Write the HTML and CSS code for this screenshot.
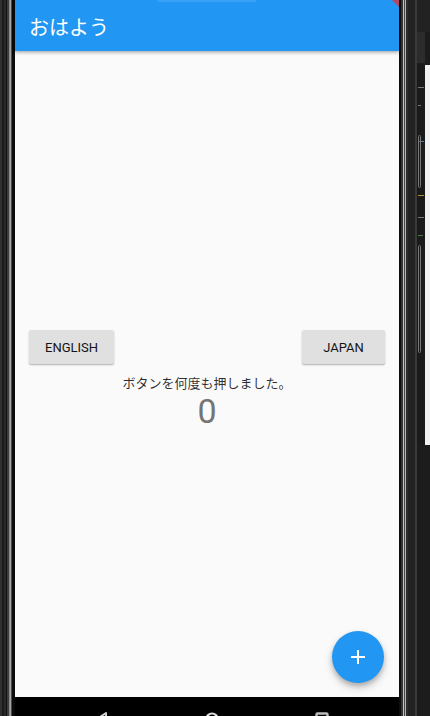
FILE: index.html
```html
<!DOCTYPE html>
<html lang="ja">
<head>
<meta charset="utf-8">
<title>おはよう</title>
<link rel="stylesheet" href="styles.css">
</head>
<body>
<div class="device">
  <div class="rim-left"></div>
  <div class="screen">
    <header class="appbar">
      <div class="notch"></div>
      <h1 class="title">おはよう</h1>
      <div class="banner"></div>
    </header>
    <main class="content">
      <div class="center">
        <div class="btn-row">
          <button class="btn">ENGLISH</button>
          <button class="btn">JAPAN</button>
        </div>
        <p class="label">ボタンを何度も押しました。</p>
        <p class="count">0</p>
      </div>
      <button class="fab" aria-label="increment">
        <svg width="14" height="14" viewBox="0 0 14 14"><path d="M7 0v14M0 7h14" stroke="#fff" stroke-width="2"/></svg>
      </button>
    </main>
    <nav class="navbar">
      <svg class="nav-icon" width="14" height="14" viewBox="0 0 14 14"><path d="M11 1 L2 7 L11 13 Z" fill="none" stroke="#d0d0d0" stroke-width="2" stroke-linejoin="round"/></svg>
      <svg class="nav-icon" width="14" height="14" viewBox="0 0 14 14"><circle cx="7" cy="7" r="5.5" fill="none" stroke="#e0e0e0" stroke-width="2.2"/></svg>
      <svg class="nav-icon" width="14" height="14" viewBox="0 0 14 14"><rect x="1.5" y="1.5" width="11" height="11" rx="1" fill="none" stroke="#bdbdbd" stroke-width="2.4"/></svg>
    </nav>
  </div>
  <div class="rim-right"></div>
  <div class="side">
    <div class="side-top"></div>
    <div class="side-tab"></div>
    <div class="side-gap"></div>
    <div class="side-mid">
      <div class="tool-col">
        <span class="mark grey m1"></span>
        <span class="mark grey m2"></span>
        <span class="mark blue m3"></span>
        <span class="pill p1"></span>
        <span class="mark orange m4"></span>
        <span class="mark grey m5"></span>
        <span class="mark green m6"></span>
        <span class="pill p2"></span>
      </div>
      <div class="strip"></div>
    </div>
    <div class="side-bottom"></div>
  </div>
</div>
</body>
</html>
```

FILE: styles.css
```css
* { box-sizing: border-box; }
html, body { margin: 0; padding: 0; }
body {
  width: 430px;
  height: 716px;
  overflow: hidden;
  background: #1c1c1c;
  font-family: Roboto, "Noto Sans CJK JP", sans-serif;
}
.device {
  display: flex;
  width: 430px;
  height: 716px;
}
.rim-left {
  width: 15px;
  flex: none;
  background: linear-gradient(to right,
    #303030 0 2px, #1c1c1c 2px 4px, #2a2a2a 4px 6px, #0e0e0e 6px 7px,
    #3e3e3e 7px 9px, #8c8c8c 9px 10px, #a4a4a4 10px 11px, #4a4a4a 11px 12px,
    #0a0a0a 12px 15px);
}
.screen {
  width: 384px;
  flex: none;
  display: flex;
  flex-direction: column;
  background: #fafafa;
}
.appbar {
  position: relative;
  height: 51px;
  flex: none;
  background: #2196f3;
  box-shadow: 0 1px 3px rgba(0,0,0,0.25), 0 2px 4px rgba(0,0,0,0.12);
  z-index: 2;
  overflow: hidden;
}
.notch {
  width: 98px;
  height: 2px;
  margin: 0 0 0 143px;
  background: #3aa2f6;
}
.title {
  margin: 0;
  height: 49px;
  display: flex;
  align-items: center;
  padding-left: 14px;
  font-family: "Noto Sans CJK JP", sans-serif;
  font-weight: 400;
  font-size: 20px;
  line-height: 1;
  color: #fff;
}
.banner {
  position: absolute;
  top: -6px;
  right: -10px;
  width: 22px;
  height: 10px;
  background: #b04866;
  transform: rotate(45deg);
}
.content {
  position: relative;
  flex: 1;
  display: flex;
  flex-direction: column;
  justify-content: center;
}
.center {
  padding-top: 13px;
  display: flex;
  flex-direction: column;
  align-items: center;
}
.btn-row {
  align-self: stretch;
  display: flex;
  justify-content: space-between;
  padding: 0 14px;
}
.btn {
  height: 34px;
  min-width: 83px;
  padding: 0 16px;
  border: none;
  border-radius: 2px;
  background: #e0e0e0;
  box-shadow: 0 1px 2px rgba(0,0,0,0.22), 0 1px 1px rgba(0,0,0,0.1);
  font-family: Roboto, sans-serif;
  font-weight: 400;
  font-size: 13px;
  color: #141414;
}
.label {
  margin: 10px 0 0;
  font-family: "Noto Sans CJK JP", sans-serif;
  font-size: 13px;
  line-height: 17px;
  color: rgba(0,0,0,0.82);
}
.count {
  margin: 0;
  font-family: Roboto, sans-serif;
  font-size: 34px;
  line-height: normal;
  color: #757575;
}
.fab {
  position: absolute;
  right: 15px;
  bottom: 14px;
  width: 52px;
  height: 52px;
  border: none;
  border-radius: 50%;
  background: #2196f3;
  box-shadow: 0 3px 5px rgba(0,0,0,0.22), 0 5px 10px rgba(0,0,0,0.14);
  display: flex;
  align-items: center;
  justify-content: center;
  padding: 0;
}
.navbar {
  height: 19px;
  flex: none;
  background: #000;
  display: flex;
  align-items: flex-start;
  padding: 15px 0 0 80px;
  gap: 96px;
  overflow: hidden;
}
.nav-icon { flex: none; }
.rim-right {
  width: 18px;
  flex: none;
  background: linear-gradient(to right,
    #0d0d0d 0 2px, #333 2px 4px, #c4c4c4 4px 5px, #454545 5px 6px,
    #b4b4b4 6px 7px, #2c2c2c 7px 9px, #222 9px 16px, #3a3a3a 16px 18px);
}
.side {
  width: 13px;
  flex: none;
  display: flex;
  flex-direction: column;
  background: #1c1c1c;
}
.side-top { height: 32px; background: #222; }
.side-tab { height: 31px; background: #2c2c2c; margin-right: 5px; }
.side-gap { height: 2px; }
.side-mid {
  height: 380px;
  display: flex;
}
.tool-col {
  width: 8px;
  position: relative;
  background: #1a1a1a;
}
.mark {
  position: absolute;
  left: 1px;
  height: 1px;
}
.grey { background: #777; width: 6px; }
.blue { background: #3d7fc4; width: 6px; }
.orange { background: #b58a2c; width: 6px; }
.green { background: #4d7a3c; width: 5px; }
.m1 { top: 22px; }
.m2 { top: 40px; width: 3px; }
.m3 { top: 76px; }
.m4 { top: 130px; }
.m5 { top: 152px; }
.m6 { top: 170px; }
.pill {
  position: absolute;
  left: 1px;
  width: 3px;
  border: 1px solid #777;
  border-radius: 2px;
}
.p1 { top: 70px; height: 53px; }
.p2 { top: 180px; height: 108px; }
.strip {
  width: 5px;
  background: #f2f2f2;
}
.side-bottom { flex: 1; background: #1c1c1c; }
```
